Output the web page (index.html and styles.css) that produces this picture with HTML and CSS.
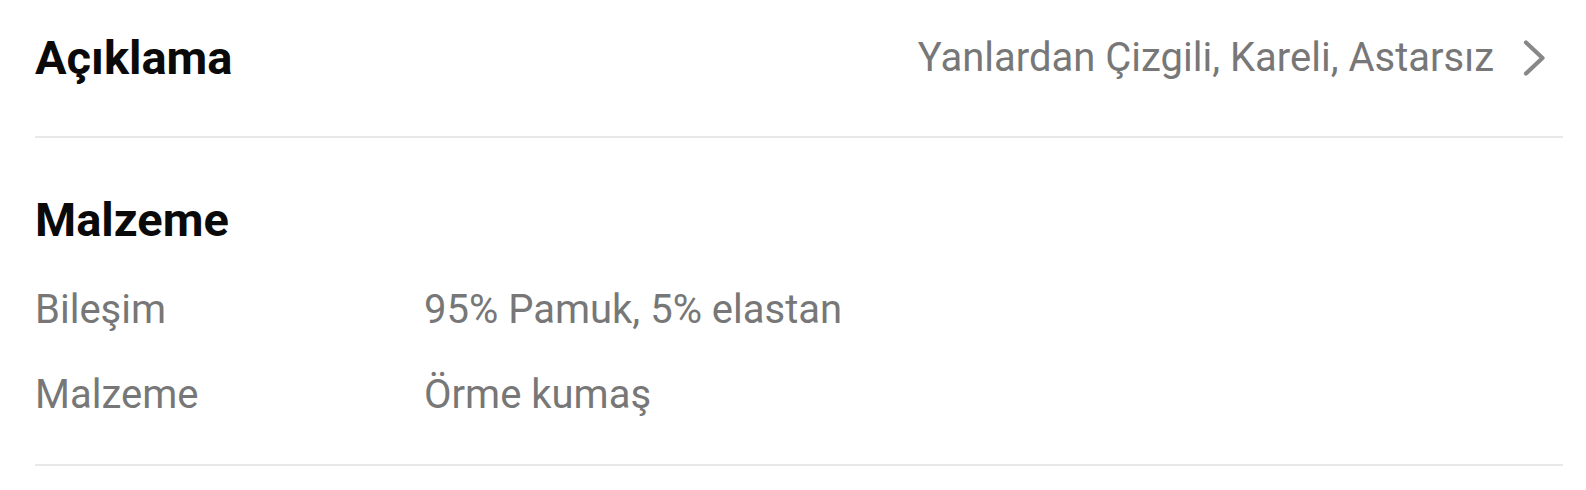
FILE: index.html
```html
<!DOCTYPE html>
<html lang="tr">
<head>
<meta charset="utf-8">
<title>Ürün detayları</title>
<link rel="stylesheet" href="styles.css">
</head>
<body>
<div class="page">
  <div class="desc-row">
    <h2 class="title">Açıklama</h2>
    <div class="desc-value">
      <span>Yanlardan Çizgili, Kareli, Astarsız</span>
      <svg class="chev" viewBox="0 0 24 36" width="24" height="36" aria-hidden="true">
        <path d="M4 2.5 L20.5 18 L4 33.5" fill="none" stroke="#888888" stroke-width="4.2" stroke-linecap="round" stroke-linejoin="round"/>
      </svg>
    </div>
  </div>
  <div class="material">
    <h2 class="title">Malzeme</h2>
    <div class="spec-list">
      <div class="spec"><span class="label">Bileşim</span><span class="val">95% Pamuk, 5% elastan</span></div>
      <div class="spec"><span class="label">Malzeme</span><span class="val">Örme kumaş</span></div>
    </div>
  </div>
</div>
</body>
</html>
```

FILE: styles.css
```css
* { box-sizing: border-box; }
html, body {
  margin: 0;
  padding: 0;
  background: #ffffff;
}
body {
  font-family: Roboto, "Noto Sans", "Liberation Sans", sans-serif;
  color: #111111;
}
.page {
  padding: 0 23px 0 35px;
}
.title {
  margin: 0;
  font-size: 47px;
  line-height: 54px;
  font-weight: 700;
  color: #0a0a0a;
}
.desc-row {
  display: flex;
  align-items: center;
  justify-content: space-between;
  padding: 31px 17px 51px 0;
  border-bottom: 2px solid #e8e8e8;
}
.desc-value {
  display: flex;
  align-items: center;
  font-size: 40px;
  line-height: 48px;
  color: #777777;
}
.chev {
  margin-left: 28px;
  display: block;
}
.material {
  padding: 55px 0 45px 0;
  border-bottom: 2px solid #e8e8e8;
}
.spec-list {
  display: flex;
  flex-direction: column;
  gap: 37px;
  margin-top: 39px;
}
.spec {
  display: grid;
  grid-template-columns: 389px 1fr;
  font-size: 40px;
  line-height: 48px;
  color: #777777;
}
```
